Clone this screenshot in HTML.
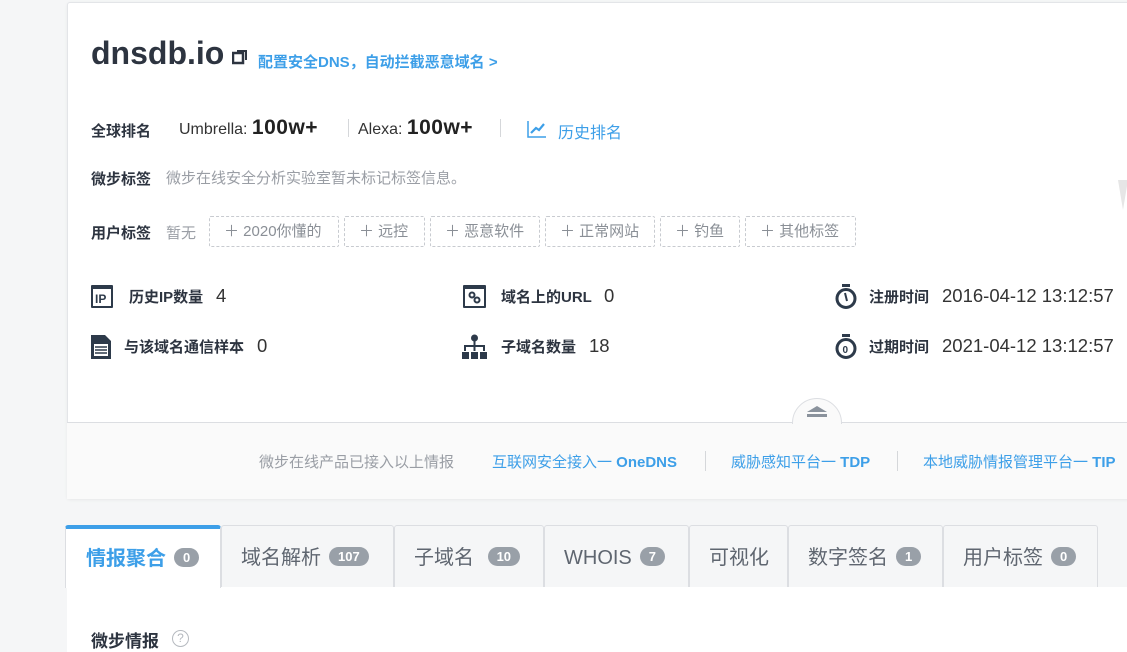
<!DOCTYPE html>
<html><head><meta charset="utf-8"><style>
*{margin:0;padding:0;box-sizing:border-box}
body{width:1127px;height:652px;overflow:hidden;background:#f5f6f7;font-family:"Liberation Sans","Noto Sans CJK SC",sans-serif;color:#333;position:relative}
.a{position:absolute;white-space:nowrap}
.card{position:absolute;left:67px;top:2px;width:1080px;height:497px;background:#fff;border:1px solid #e3e5e8;border-radius:3px;box-shadow:0 1px 3px rgba(0,0,0,.06)}
.foot{position:absolute;left:67px;top:422px;width:1080px;height:77px;background:#fafafa;border-top:1px solid #dcdee2}
.lbl{font-size:15px;font-weight:bold;color:#2d3440}
.tag{position:absolute;top:216px;height:31px;border:1px dashed #c8cbd0;border-radius:2px;font-size:15px;color:#8a8f96;line-height:29px;padding-left:14px}
.blue{color:#3d9fe8}
.sv{font-size:18.5px;color:#333}
.tab{position:absolute;top:525px;height:62px;border:1px solid #dcdee2;border-bottom:none;background:#f5f6f7;font-size:20px;color:#5f6670;line-height:64px;padding-left:19px;border-radius:3px 3px 0 0}
.b{display:inline-block;background:#99a0a8;color:#fff;font-size:13px;font-weight:bold;line-height:19px;height:19px;border-radius:10px;padding:0 9px;vertical-align:3px;margin-left:8px}
</style></head><body>
<div class="card"></div>
<div class="a" style="left:1118px;top:180px;width:0;height:0;border-left:5px solid transparent;border-right:5px solid transparent;border-top:30px solid #e6e6e6"></div>
<div class="a" style="left:91px;top:35px;font-size:32px;font-weight:bold;color:#2d3440">dnsdb.io</div>
<svg class="a" style="left:232px;top:49px" width="16" height="16"><rect x="1" y="4" width="10" height="10" fill="none" stroke="#2d3440" stroke-width="2.5"/><path d="M5 2H14V11" fill="none" stroke="#2d3440" stroke-width="2"/></svg>
<div class="a" style="left:258px;top:51px;font-size:15px;font-weight:bold;color:#3d9fe8">配置安全DNS，自动拦截恶意域名 &gt;</div>

<div class="a lbl" style="left:91px;top:120px">全球排名</div>
<div class="a" style="left:179px;top:116px;font-size:16px;color:#333">Umbrella: <b style="font-size:21px;color:#222;letter-spacing:0.5px">100w+</b></div>
<div class="a" style="left:348px;top:119px;width:1px;height:18px;background:#d5d7da"></div>
<div class="a" style="left:358px;top:116px;font-size:16px;color:#333">Alexa: <b style="font-size:21px;color:#222;letter-spacing:0.5px">100w+</b></div>
<div class="a" style="left:500px;top:119px;width:1px;height:18px;background:#d5d7da"></div>
<svg class="a" style="left:527px;top:120px" width="20" height="18"><path d="M1 1V17H19" fill="none" stroke="#3d9fe8" stroke-width="1.5"/><path d="M4 13L9 8L12 10L17 4" fill="none" stroke="#3d9fe8" stroke-width="2.2"/></svg>
<div class="a blue" style="left:558px;top:119px;font-size:16px">历史排名</div>

<div class="a lbl" style="left:91px;top:168px">微步标签</div>
<div class="a" style="left:166px;top:167px;font-size:15px;color:#9a9ea5">微步在线安全分析实验室暂未标记标签信息。</div>

<div class="a lbl" style="left:91px;top:222px">用户标签</div>
<div class="a" style="left:166px;top:222px;font-size:15px;color:#9a9ea5">暂无</div>
<div class="tag" style="left:209px;width:130px">＋ 2020你懂的</div>
<div class="tag" style="left:344px;width:81px">＋ 远控</div>
<div class="tag" style="left:430px;width:110px">＋ 恶意软件</div>
<div class="tag" style="left:545px;width:110px">＋ 正常网站</div>
<div class="tag" style="left:660px;width:80px">＋ 钓鱼</div>
<div class="tag" style="left:745px;width:111px">＋ 其他标签</div>

<svg class="a" style="left:90px;top:284px" width="24" height="25"><rect x="1" y="1" width="22" height="23" rx="1" fill="#2d3a4a"/><rect x="3" y="5" width="18" height="17" fill="#fff"/><text x="5" y="19" font-size="12" font-weight="bold" fill="#2d3a4a" font-family="Liberation Sans">IP</text></svg>
<div class="a lbl" style="left:129px;top:286px">历史IP数量</div>
<div class="a sv" style="left:216px;top:285px">4</div>
<svg class="a" style="left:90px;top:334px" width="22" height="26"><path d="M1 1H15L21 7V25H1Z" fill="#2d3a4a"/><rect x="4" y="10" width="14" height="12" fill="#fff"/><path d="M5 13H17M5 16H17M5 19H17" stroke="#2d3a4a" stroke-width="1.5"/></svg>
<div class="a lbl" style="left:124px;top:336px">与该域名通信样本</div>
<div class="a sv" style="left:257px;top:335px">0</div>

<svg class="a" style="left:462px;top:284px" width="25" height="25"><rect x="1" y="1" width="23" height="23" rx="1" fill="#2d3a4a"/><rect x="3" y="5" width="19" height="17" fill="#fff"/><circle cx="10" cy="11" r="2.5" fill="none" stroke="#2d3a4a" stroke-width="2"/><circle cx="15" cy="16" r="2.5" fill="none" stroke="#2d3a4a" stroke-width="2"/></svg>
<div class="a lbl" style="left:501px;top:286px">域名上的URL</div>
<div class="a sv" style="left:604px;top:285px">0</div>
<svg class="a" style="left:462px;top:334px" width="25" height="26"><circle cx="12.5" cy="4" r="3.5" fill="#2d3a4a"/><path d="M12.5 6V12M3 17V12H22V17M12.5 12V17" stroke="#2d3a4a" stroke-width="2" fill="none"/><rect x="0" y="18" width="7" height="7" fill="#2d3a4a"/><rect x="9" y="18" width="7" height="7" fill="#2d3a4a"/><rect x="18" y="18" width="7" height="7" fill="#2d3a4a"/></svg>
<div class="a lbl" style="left:501px;top:336px">子域名数量</div>
<div class="a sv" style="left:589px;top:335px">18</div>

<svg class="a" style="left:834px;top:284px" width="24" height="26"><rect x="8" y="0" width="8" height="3" fill="#2d3a4a"/><circle cx="12" cy="14.5" r="9" fill="none" stroke="#2d3a4a" stroke-width="3"/><path d="M11 9L13 17" stroke="#2d3a4a" stroke-width="2"/></svg>
<div class="a lbl" style="left:869px;top:286px">注册时间</div>
<div class="a sv" style="left:942px;top:285px">2016-04-12 13:12:57</div>
<svg class="a" style="left:834px;top:334px" width="24" height="26"><rect x="8" y="0" width="8" height="3" fill="#2d3a4a"/><circle cx="12" cy="14.5" r="9" fill="none" stroke="#2d3a4a" stroke-width="3"/><text x="8.5" y="19" font-size="10" font-weight="bold" fill="#2d3a4a" font-family="Liberation Sans">0</text></svg>
<div class="a lbl" style="left:869px;top:336px">过期时间</div>
<div class="a sv" style="left:942px;top:335px">2021-04-12 13:12:57</div>

<div class="foot"></div>
<div class="a" style="left:792px;top:398px;width:50px;height:50px;border-radius:50%;border:1px solid #dcdee2;background:#fafafa;clip-path:inset(0 0 24px 0)"></div>
<div class="a" style="left:807px;top:406px;width:0;height:0;border-left:10px solid transparent;border-right:10px solid transparent;border-bottom:6px solid #8a929c"></div>
<div class="a" style="left:807px;top:414px;width:20px;height:3px;background:#8a929c"></div>
<div class="a" style="left:259px;top:451px;font-size:15px;color:#9a9ea5">微步在线产品已接入以上情报</div>
<div class="a blue" style="left:492px;top:451px;font-size:15px">互联网安全接入一 <b>OneDNS</b></div>
<div class="a" style="left:705px;top:451px;width:1px;height:20px;background:#d5d7da"></div>
<div class="a blue" style="left:731px;top:451px;font-size:15px">威胁感知平台一 <b>TDP</b></div>
<div class="a" style="left:897px;top:451px;width:1px;height:20px;background:#d5d7da"></div>
<div class="a blue" style="left:923px;top:451px;font-size:15px">本地威胁情报管理平台一 <b>TIP</b></div>

<div class="a" style="left:67px;top:587px;width:1060px;height:65px;background:#fff"></div>
<div class="tab" style="left:65px;width:156px;background:#fff;border-top:4px solid #3d9fe8;height:63px;line-height:60px;color:#3d9fe8;font-weight:bold;padding-left:20px">情报聚合<span class="b">0</span></div>
<div class="tab" style="left:221px;width:173px">域名解析<span class="b">107</span></div>
<div class="tab" style="left:394px;width:150px">子域名 <span class="b">10</span></div>
<div class="tab" style="left:544px;width:145px">WHOIS<span class="b">7</span></div>
<div class="tab" style="left:689px;width:99px">可视化</div>
<div class="tab" style="left:788px;width:155px">数字签名<span class="b">1</span></div>
<div class="tab" style="left:943px;width:155px">用户标签<span class="b">0</span></div>

<div class="a lbl" style="left:91px;top:627px;font-size:17px">微步情报</div>
<div class="a" style="left:172px;top:630px;width:17px;height:17px;border:1.5px solid #b5b9bf;border-radius:50%;font-size:12px;color:#b5b9bf;text-align:center;line-height:14px">?</div>
</body></html>
